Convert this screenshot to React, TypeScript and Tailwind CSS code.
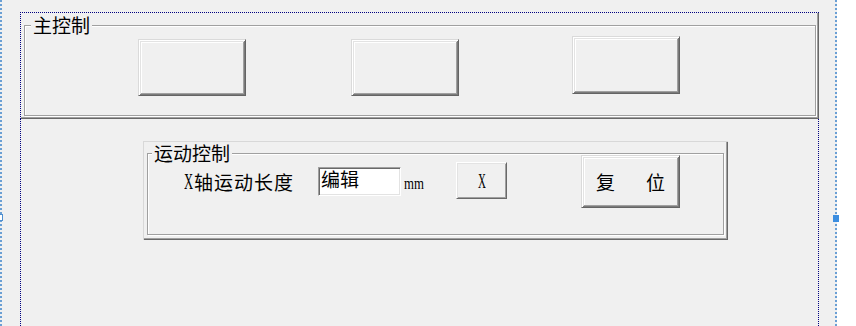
import React from 'react'

// MFC dialog editor mock: two panels, group boxes, classic 3D buttons

const cjk = "font-['Noto_Sans_CJK_SC',sans-serif]"
const serif = "font-['Liberation_Serif','Noto_Sans_CJK_SC',serif]"

interface GroupProps {
  title: string
  className: string
  labelClass: string
  children?: React.ReactNode
}

const GroupBox: React.FC<GroupProps> = ({ title, className, labelClass, children }) => (
  <div className={`relative border border-[#a0a0a0] shadow-[1px_1px_0_#ffffff,inset_1px_1px_0_#ffffff] ${className}`}>
    <span className={`absolute -top-[11px] bg-[#f0f0f0] px-[2px] text-[19px] leading-[20px] text-black ${cjk} ${labelClass}`}>
      {title}
    </span>
    {children}
  </div>
)

// default push button (thick frame)
const DefButton: React.FC<{ className: string; children?: React.ReactNode }> = ({ className, children }) => (
  <div
    className={`flex items-center justify-center bg-[#f0f0f0] border border-t-[#dadada] border-l-[#dadada] border-r-[#646464] border-b-[#646464] shadow-[inset_1px_1px_0_#ffffff,inset_-1px_-1px_0_#7a7a7a,inset_2px_2px_0_#e3e3e3,inset_-2px_-2px_0_#a0a0a0,inset_3px_3px_0_#ffffff] ${className}`}
  >
    {children}
  </div>
)

const App: React.FC = () => {
  return (
    <div className="relative flex w-[856px] h-[326px] overflow-hidden bg-white">
      {/* design surface */}
      <div className="flex flex-col w-[837px] h-full bg-[#f0f0f0] border-l-2 border-r-2 border-dotted border-[#6a9fd4] pl-[18px] pr-[16px] pt-[12px]">
        {/* 主控制 panel */}
        <div className="w-[799px] h-[107px] shrink-0 border-t border-l border-dotted border-[#000080] shadow-[inset_-1px_-1px_0_#696969,inset_-2px_-2px_0_#a0a0a0] pt-[12px] pl-[3px]">
          <GroupBox title="主控制" className="w-[792px] h-[91px]" labelClass="left-[6px]">
            <div className="flex items-start pl-[113px] pt-[13px]">
              <DefButton className="w-[108px] h-[57px]" />
              <DefButton className="w-[108px] h-[57px] ml-[105px]" />
              <DefButton className="w-[108px] h-[58px] ml-[113px] -mt-[3px]" />
            </div>
          </GroupBox>
        </div>

        {/* 运动控制 panel */}
        <div className="flex-1 w-[799px] border-l border-r border-dotted border-[#000080] pt-[22px] pl-[122px]">
          <div className="w-[585px] h-[99px] border-t border-l border-[#d8d8d8] shadow-[inset_-1px_-1px_0_#696969,inset_-2px_-2px_0_#a0a0a0] pt-[11px] pl-[3px]">
            <GroupBox title="运动控制" className="w-[577px] h-[82px]" labelClass="left-[4px]">
              <div className="flex items-center h-[53px] mt-[1px] ml-[36px] text-black">
                <div className={`flex items-center w-[134px] text-[19px] leading-[20px] tracking-[1px] ${cjk}`}>
                  <span className={`inline-block w-[10px] text-[23px] leading-[20px] scale-x-[0.55] origin-left tracking-normal ${serif}`}>X</span>
                  <span>轴运动长度</span>
                </div>
                <div className="w-[83px] h-[29px] self-center bg-white border border-t-[#a0a0a0] border-l-[#a0a0a0] border-r-white border-b-white shadow-[inset_1px_1px_0_#696969,inset_-1px_-1px_0_#e3e3e3] pl-[2px] pt-[1px]">
                  <span className={`text-[19px] leading-[19px] ${cjk}`}>编辑</span>
                </div>
                <div className="w-[55px] pl-[3px] pt-[2px]">
                  <span className={`inline-block text-[16px] leading-[16px] scale-x-[0.8] origin-left ${serif}`}>mm</span>
                </div>
                <div className="flex items-center justify-center w-[51px] h-[37px] -mt-[2px] bg-[#f0f0f0] border border-t-white border-l-white border-r-[#696969] border-b-[#696969] shadow-[inset_1px_1px_0_#e3e3e3,inset_-1px_-1px_0_#a0a0a0]">
                  <span className={`inline-block text-[22px] leading-[20px] scale-x-50 ${serif}`}>X</span>
                </div>
                <DefButton className={`w-[99px] h-[53px] ml-[74px] gap-[31px] text-[19px] leading-[20px] ${cjk}`}>
                  <span>复</span>
                  <span>位</span>
                </DefButton>
              </div>
            </GroupBox>
          </div>
        </div>
      </div>

      {/* resize handles of the dialog */}
      <div className="absolute left-[-3px] top-[214px] w-[6px] h-[7px] border border-[#4f8fd0] bg-white" />
      <div className="absolute left-[833px] top-[215px] w-[6px] h-[7px] bg-[#3c8ee0]" />
    </div>
  )
}

export default App
